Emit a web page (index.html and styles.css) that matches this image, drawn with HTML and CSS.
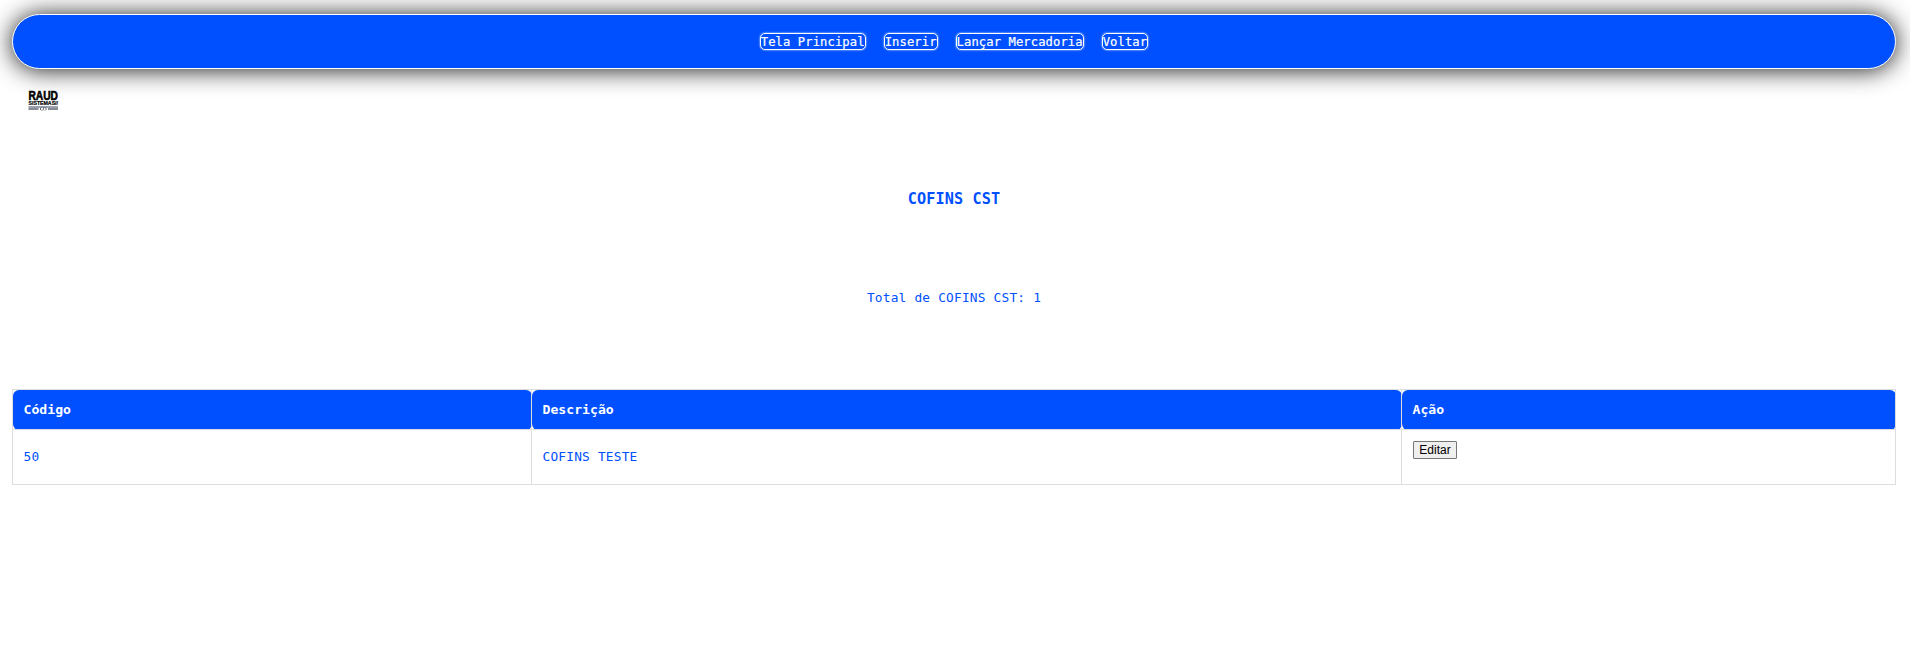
FILE: index.html
```html
<!DOCTYPE html>
<html lang="pt-BR">
<head>
<meta charset="utf-8">
<title>COFINS CST</title>
<link rel="stylesheet" href="styles.css">
</head>
<body>
<nav class="menu">
  <a class="menu-link">Tela Principal</a>
  <a class="menu-link">Inserir</a>
  <a class="menu-link">Lançar Mercadoria</a>
  <a class="menu-link">Voltar</a>
</nav>
<svg class="logo" width="32" height="22" viewBox="0 0 32 22">
  <text class="logo-name" x="0.5" y="9.7" textLength="29.5" lengthAdjust="spacingAndGlyphs">RAUD</text>
  <text class="logo-sub" x="0.5" y="14.8" textLength="29.5" lengthAdjust="spacingAndGlyphs">SISTEMAS//</text>
  <path d="M0.5 17h29.5" stroke="#34435f" stroke-width="1"/>
  <path d="M0.5 19h10M20 19h10" stroke="#111827" stroke-width="1.2"/>
  <path d="M13.5 17.5l-1.5 1.5 1.5 1.5M17 17.5l1.5 1.5-1.5 1.5M15.8 17.5l-1 3" fill="none" stroke="#333" stroke-width=".8"/>
</svg>
<h1 class="title">COFINS CST</h1>
<p class="total">Total de COFINS CST: 1</p>
<table class="grid">
  <colgroup><col class="col-code"><col class="col-desc"><col></colgroup>
  <thead><tr><th>Código</th><th>Descrição</th><th>Ação</th></tr></thead>
  <tbody><tr><td>50</td><td>COFINS TESTE</td><td class="action"><button class="edit">Editar</button></td></tr></tbody>
</table>
</body>
</html>
```
FILE: styles.css
```css
* { box-sizing: border-box; }
body {
  margin: 0;
  padding: 14px 14px 0 12px;
  background: #fff;
  color: #0050ff;
  font-family: "DejaVu Sans Mono", monospace;
  font-size: 12.8px;
  letter-spacing: .21px;
}
.menu {
  display: flex;
  justify-content: center;
  gap: 18px;
  height: 55px;
  padding-top: 18px;
  background: #0050ff;
  border: 1px solid #fff;
  border-radius: 28px;
  box-shadow: 0 1px 25px rgba(0, 0, 0, .9);
}
.menu-link {
  height: 17px;
  border: 1px solid #fff;
  border-radius: 5px;
  box-shadow: 0 0 2px #fff;
  color: #fff;
  font-size: 12.2px;
  line-height: 16px;
  letter-spacing: .08px;
  -webkit-text-stroke: .2px #fff;
  white-space: nowrap;
}
.logo { display: block; margin: 21px 0 0 16px; overflow: visible; }
.logo-name { font: 900 12.4px "Liberation Sans", sans-serif; letter-spacing: 0; fill: #000; stroke: #000; stroke-width: .6; }
.logo-sub { font: bold 5.2px "Liberation Sans", sans-serif; letter-spacing: 0; fill: #000; stroke: #000; stroke-width: .2; }
.title {
  margin: 77px 0 0;
  font-size: 15.2px;
  line-height: 20px;
  letter-spacing: .09px;
  text-align: center;
}
.total { margin: 79px 0 0; line-height: 20px; text-align: center; }
.grid {
  width: 100%;
  margin-top: 81px;
  border-collapse: collapse;
  table-layout: fixed;
}
.col-code { width: 519px; }
.col-desc { width: 870px; }
.grid th, .grid td { padding: 0 11px; border: 1px solid #ddd; text-align: left; }
.grid th { height: 40px; background: #0050ff; color: #fff; border-radius: 6px; font-size: 13.1px; letter-spacing: .03px; }
.grid td { height: 55px; padding-bottom: 2px; }
.grid th, .grid td:not(.action) { padding-left: 10.5px; }
.grid .action { padding-top: 11px; vertical-align: top; }
.edit {
  display: block;
  width: 44px;
  height: 18px;
  padding: 0;
  border: 1px solid #767676;
  border-radius: 1px;
  background: #efefef;
  color: #000;
  font: 12px/16px "Liberation Sans", Arial, sans-serif;
}
```
